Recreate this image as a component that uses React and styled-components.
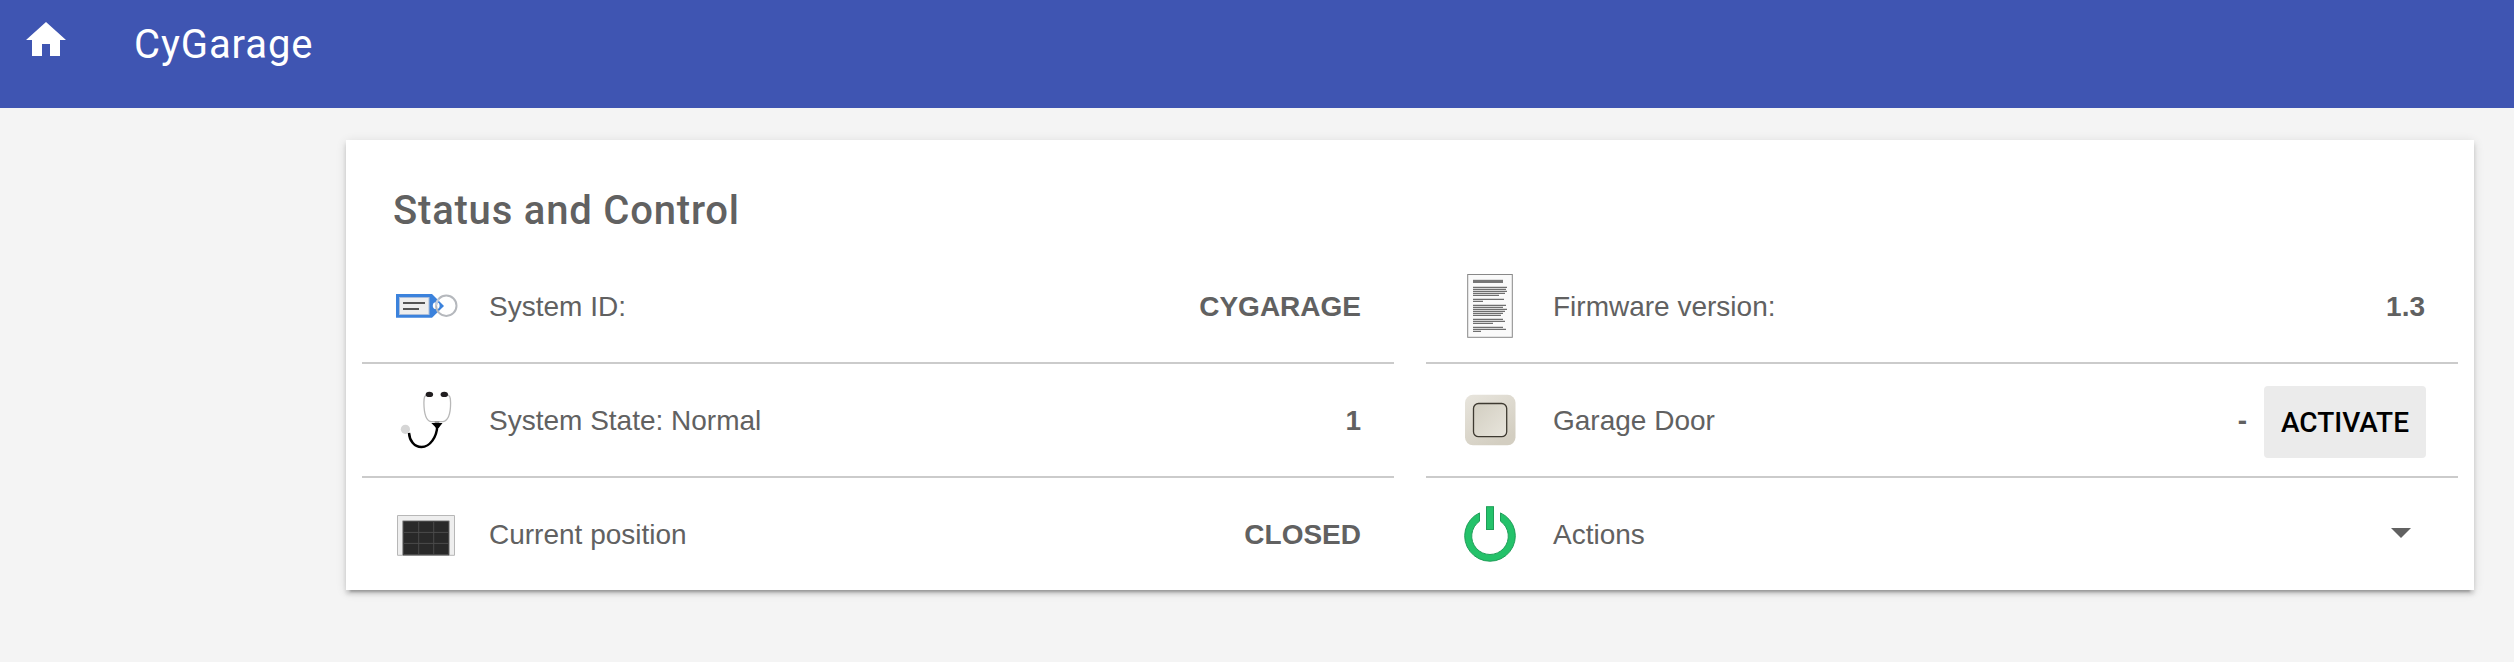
import React from "react";
import styled, { createGlobalStyle } from "styled-components";

const GlobalStyle = createGlobalStyle`
  body {
    margin: 0;
    background: #f4f4f4;
    color: #616161;
    font-family: "Liberation Sans", Helvetica, Arial, sans-serif;
  }
`;

const Header = styled.header`
  display: flex;
  align-items: flex-start;
  gap: 64px;
  box-sizing: border-box;
  height: 108px;
  padding: 16px 22px 0;
  background: #3f55b2;
  color: #fff;
`;

const HomeLink = styled.a`
  display: flex;
  width: 48px;
  height: 48px;
`;

const AppTitle = styled.h1`
  margin: 5px 0 0;
  font: 400 40px/48px Roboto, sans-serif;
  letter-spacing: 0.9px;
`;

const Main = styled.main`
  padding: 32px 40px 72px 346px;
`;

const Card = styled.section`
  box-sizing: border-box;
  height: 450px;
  padding: 47px 16px 0;
  background: #fff;
  box-shadow: 0 4px 4px 0 rgba(0, 0, 0, 0.14), 0 6px 2px -4px rgba(0, 0, 0, 0.2),
    0 2px 10px 0 rgba(0, 0, 0, 0.12);
`;

const CardTitle = styled.h2`
  margin: 0;
  padding-left: 31px;
  height: 63px;
  font: 500 40px/48px Roboto, sans-serif;
  letter-spacing: 0.8px;
`;

const Columns = styled.div`
  display: grid;
  grid-template-columns: 1fr 1fr;
  column-gap: 32px;
`;

const Row = styled.div`
  display: flex;
  align-items: center;
  height: 112px;
  padding: 0 32px;
  font-size: 28px;
  line-height: 32px;
  border-bottom: ${(p) => (p.$last ? "0" : "2px solid #cbcbcb")};
`;

const IconBox = styled.div`
  display: flex;
  width: 64px;
  height: 64px;
  margin-right: 31px;
`;

const Label = styled.span`
  flex: 1;
  padding-top: 2px;
`;

const Value = styled.span`
  padding: 2px 1px 0 0;
  font-weight: 700;
`;

const ActivateButton = styled.button`
  width: 162px;
  height: 72px;
  margin: 4px 0 0 16px;
  padding: 2px 0 0;
  border: 0;
  border-radius: 4px;
  background: #ebebeb;
  color: #000;
  font: 500 28px/32px Roboto, sans-serif;
`;

const Caret = styled.span`
  margin: 0 15px 2px 0;
  border: 10px solid transparent;
  border-top-color: #616161;
  border-bottom-width: 0;
`;

const Svg = (props) => <svg width="64" height="64" viewBox="0 0 64 64" {...props} />;

const HomeIcon = () => (
  <svg width="48" height="48" viewBox="0 0 24 24" fill="currentColor">
    <path d="M10 20v-6h4v6h5v-8h3L12 3 2 12h3v8z" />
  </svg>
);

const TagIcon = () => (
  <Svg>
    <path d="M2 20H38L50 32 38 43.7H2z" fill="#3b82dc" />
    <rect x="5.5" y="23.5" width="29.5" height="17" fill="#eee" stroke="#a9bddb" />
    <path d="M9 29H31M9 35H25" stroke="#555" strokeWidth="2" />
    <circle cx="42.2" cy="31.7" r="3.4" fill="#fff" />
    <circle cx="52.3" cy="31.7" r="10.2" fill="none" stroke="#b5b8bd" strokeWidth="2" />
    <path d="M42 31.5a10 10 0 0 1 3-6.5" fill="none" stroke="#c4cede" strokeWidth="2" />
  </Svg>
);

const StethoscopeIcon = () => (
  <Svg fill="none">
    <path
      d="M34 6.5C30 7 30 10 29.9 15C30 24 31 32.5 37 33.7H49C54.5 32.5 56.6 24 56.6 15C56.6 9 55.8 7 52.5 6.3"
      stroke="#b8b8b8"
      strokeWidth="1.3"
    />
    <rect x="40.7" y="33" width="4.6" height="2" fill="#999" />
    <ellipse cx="35.4" cy="6.4" rx="3.7" ry="2.7" fill="#211e20" />
    <ellipse cx="50.3" cy="6.4" rx="3.7" ry="2.7" fill="#211e20" />
    <path d="M37.3 35H48.5Q46.5 37.5 44.7 40H42Q40 37.5 37.3 35z" fill="#000" />
    <path d="M43.3 38C42.8 49 36 59 27.5 59C20 59 15.5 52.5 15 44.8" stroke="#000" strokeWidth="2.5" />
    <circle cx="11.4" cy="41.3" r="4.6" fill="#d6d6d6" />
  </Svg>
);

const GarageIcon = () => (
  <Svg>
    <path
      d="M3.5 13.5H60.5V53.3H55.3V19H8.5V53.3H3.5z"
      fill="#eee"
      stroke="#b7b7b7"
    />
    <rect x="9" y="19" width="46" height="34.3" fill="#292929" stroke="#777" strokeWidth=".7" />
    <path d="M24.7 20V52M39.7 20V52M10 30.4H54.5M10 41.4H54.5M10 52.5H54.5" stroke="#4b4b4b" />
  </Svg>
);

const docLines = [
  [13.3, 49], [15.3, 48], [17.3, 49], [19.3, 47], [21.3, 41],
  [25.3, 46], [27.3, 25],
  [31.3, 48], [33.3, 45], [35.3, 49], [37.3, 47], [39.3, 45], [41.3, 43],
  [45.3, 45], [47.3, 47], [49.3, 35],
  [53.3, 45], [55.3, 48], [57.3, 23],
];

const DocumentIcon = () => (
  <Svg>
    <rect x="9.7" y=".5" width="44.6" height="62.8" fill="#fafafa" stroke="#888" />
    <rect x="15" y="5.8" width="30" height="3.2" fill="#777" />
    <path d={docLines.map(([y, end]) => `M15 ${y}H${end}`).join("")} stroke="#4d4d4d" />
  </Svg>
);

const SwitchIcon = () => (
  <Svg>
    <defs>
      <linearGradient id="plate" x1="0" y1="0" x2="0.6" y2="1">
        <stop offset="0" stopColor="#e8e5dd" />
        <stop offset="1" stopColor="#d3cec1" />
      </linearGradient>
      <linearGradient id="rocker" x1="0" y1="0" x2="1" y2="1">
        <stop offset="0" stopColor="#d2cec1" />
        <stop offset="1" stopColor="#e8e5dc" />
      </linearGradient>
    </defs>
    <rect x="7" y="6.8" width="50.5" height="50.5" rx="8" fill="url(#plate)" />
    <rect x="15.5" y="15.5" width="33.2" height="33.2" rx="5" fill="url(#rocker)" stroke="#3e3a31" strokeWidth="1.3" />
  </Svg>
);

const PowerIcon = () => (
  <Svg fill="#24c26a" stroke="#1f9e58">
    <path d="M21.5 10.9A25.3 25.3 0 1 0 42.5 10.9V19.2A18.3 18.3 0 1 1 21.5 19.2z" />
    <rect x="28.5" y="4.7" width="7" height="22.8" />
  </Svg>
);

export default function App() {
  return (
    <>
      <GlobalStyle />
      <Header>
        <HomeLink aria-label="Home"><HomeIcon /></HomeLink>
        <AppTitle>CyGarage</AppTitle>
      </Header>
      <Main>
        <Card>
          <CardTitle>Status and Control</CardTitle>
          <Columns>
            <Row>
              <IconBox><TagIcon /></IconBox>
              <Label>System ID:</Label>
              <Value>CYGARAGE</Value>
            </Row>
            <Row>
              <IconBox><DocumentIcon /></IconBox>
              <Label>Firmware version:</Label>
              <Value>1.3</Value>
            </Row>
            <Row>
              <IconBox><StethoscopeIcon /></IconBox>
              <Label>System State: Normal</Label>
              <Value>1</Value>
            </Row>
            <Row>
              <IconBox><SwitchIcon /></IconBox>
              <Label>Garage Door</Label>
              <Value>-</Value>
              <ActivateButton>ACTIVATE</ActivateButton>
            </Row>
            <Row $last>
              <IconBox><GarageIcon /></IconBox>
              <Label>Current position</Label>
              <Value>CLOSED</Value>
            </Row>
            <Row $last>
              <IconBox><PowerIcon /></IconBox>
              <Label>Actions</Label>
              <Caret />
            </Row>
          </Columns>
        </Card>
      </Main>
    </>
  );
}
